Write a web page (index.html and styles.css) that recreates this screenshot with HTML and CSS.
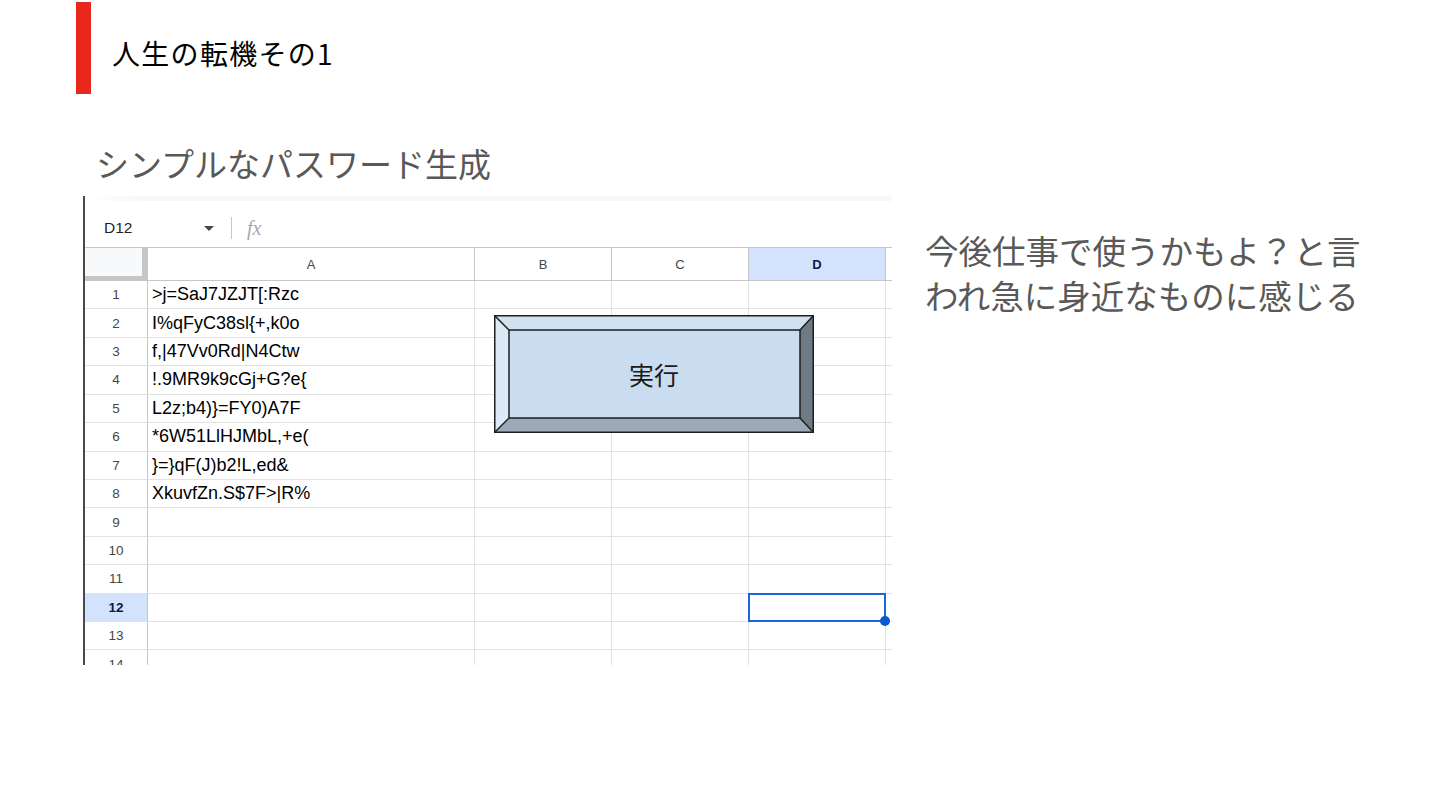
FILE: index.html
```html
<!DOCTYPE html>
<html lang="ja">
<head>
<meta charset="utf-8">
<title>人生の転機その1</title>
<link rel="stylesheet" href="styles.css">
</head>
<body>
<div class="slide">
  <header class="header">
    <div class="bar"></div>
    <h1 class="title">人生の転機その1</h1>
  </header>
  <main class="content">
    <section class="left">
      <h2 class="subtitle">シンプルなパスワード生成</h2>
      <div class="sheet">
        <div class="toolstrip"></div>
        <div class="formula">
          <span class="namebox">D12</span>
          <span class="caret"></span>
          <span class="sep"></span>
          <span class="fx">fx</span>
        </div>
        <div class="grid">
          <div class="corner"></div>
          <div class="colh">A</div>
          <div class="colh">B</div>
          <div class="colh">C</div>
          <div class="colh sel">D</div>
          <div class="colh edge"></div>

          <div class="rowh">1</div><div class="cell">&gt;j=SaJ7JZJT[:Rzc</div><div class="cell"></div><div class="cell"></div><div class="cell"></div><div class="cell edge"></div>
          <div class="rowh">2</div><div class="cell">I%qFyC38sl{+,k0o</div><div class="cell"></div><div class="cell"></div><div class="cell"></div><div class="cell edge"></div>
          <div class="rowh">3</div><div class="cell">f,|47Vv0Rd|N4Ctw</div><div class="cell"></div><div class="cell"></div><div class="cell"></div><div class="cell edge"></div>
          <div class="rowh">4</div><div class="cell">!.9MR9k9cGj+G?e{</div><div class="cell"></div><div class="cell"></div><div class="cell"></div><div class="cell edge"></div>
          <div class="rowh">5</div><div class="cell">L2z;b4)}=FY0)A7F</div><div class="cell"></div><div class="cell"></div><div class="cell"></div><div class="cell edge"></div>
          <div class="rowh">6</div><div class="cell">*6W51LlHJMbL,+e(</div><div class="cell"></div><div class="cell"></div><div class="cell"></div><div class="cell edge"></div>
          <div class="rowh">7</div><div class="cell">}=}qF(J)b2!L,ed&amp;</div><div class="cell"></div><div class="cell"></div><div class="cell"></div><div class="cell edge"></div>
          <div class="rowh">8</div><div class="cell">XkuvfZn.S$7F&gt;|R%</div><div class="cell"></div><div class="cell"></div><div class="cell"></div><div class="cell edge"></div>
          <div class="rowh">9</div><div class="cell"></div><div class="cell"></div><div class="cell"></div><div class="cell"></div><div class="cell edge"></div>
          <div class="rowh">10</div><div class="cell"></div><div class="cell"></div><div class="cell"></div><div class="cell"></div><div class="cell edge"></div>
          <div class="rowh">11</div><div class="cell"></div><div class="cell"></div><div class="cell"></div><div class="cell"></div><div class="cell edge"></div>
          <div class="rowh sel">12</div><div class="cell"></div><div class="cell"></div><div class="cell"></div><div class="cell active"><span class="handle"></span></div><div class="cell edge"></div>
          <div class="rowh">13</div><div class="cell"></div><div class="cell"></div><div class="cell"></div><div class="cell"></div><div class="cell edge"></div>
          <div class="rowh">14</div><div class="cell"></div><div class="cell"></div><div class="cell"></div><div class="cell"></div><div class="cell edge"></div>
        </div>
        <div class="runbtn">
          <svg class="bevel" width="320" height="118" viewBox="0 0 320 118">
            <polygon points="0,0 320,0 306,15 15,15" fill="#d2e1f1"/>
            <polygon points="0,0 15,15 15,103 0,118" fill="#dee9f5"/>
            <polygon points="320,0 320,118 306,103 306,15" fill="#6f7a85"/>
            <polygon points="0,118 15,103 306,103 320,118" fill="#9ba9b8"/>
            <rect x="15" y="15" width="291" height="88" fill="#c9dcf0"/>
            <g stroke="#1e1e1e" stroke-width="1.5" fill="none">
              <rect x="0.75" y="0.75" width="318.5" height="116.5"/>
              <rect x="15" y="15" width="291" height="88"/>
              <line x1="0.75" y1="0.75" x2="15" y2="15"/>
              <line x1="319.25" y1="0.75" x2="306" y2="15"/>
              <line x1="0.75" y1="117.25" x2="15" y2="103"/>
              <line x1="319.25" y1="117.25" x2="306" y2="103"/>
            </g>
          </svg>
          <span class="btnlabel">実行</span>
        </div>
      </div>
    </section>
    <p class="note">今後仕事で使うかもよ？と言われ急に身近なものに感じる</p>
  </main>
</div>
</body>
</html>
```

FILE: styles.css
```css
* { box-sizing: border-box; }
html, body { margin: 0; padding: 0; background: #ffffff; }
body {
  width: 1440px;
  height: 810px;
  overflow: hidden;
  font-family: "Liberation Sans", "Noto Sans CJK JP", sans-serif;
}
.slide { width: 1440px; height: 810px; }

.header {
  display: flex;
  align-items: flex-start;
  height: 92px;
  margin-top: 2px;
  padding-left: 76px;
}
.bar { width: 15px; height: 92px; background: #e8281c; flex: none; }
.title {
  margin: 0 0 0 21px;
  padding-top: 31px;
  font-family: "Noto Sans CJK JP", sans-serif;
  font-weight: 400;
  font-size: 28px;
  line-height: 40px;
  letter-spacing: 1.3px;
  color: #000000;
}

.content {
  display: flex;
  align-items: flex-start;
  margin-top: 49px;
  padding-left: 83px;
}
.left { width: 809px; flex: none; }
.subtitle {
  margin: 0 0 13px 13px;
  font-family: "Noto Sans CJK JP", sans-serif;
  font-weight: 400;
  font-size: 33px;
  line-height: 40px;
  color: #595959;
}

.sheet {
  position: relative;
  width: 809px;
  height: 469px;
  overflow: hidden;
  border-left: 2px solid #4a4a4a;
  background: #ffffff;
}
.toolstrip { height: 5px; background: linear-gradient(to right, #ffffff 0, #f6f7f9 60px, #f6f7f9 100%); }
.formula {
  height: 46px;
  display: flex;
  align-items: center;
  padding-left: 19px;
  padding-top: 8px;
}
.namebox { width: 100px; font-size: 15.5px; color: #1f1f1f; }
.caret {
  width: 0; height: 0;
  border-left: 5px solid transparent;
  border-right: 5px solid transparent;
  border-top: 5px solid #444746;
  margin-right: 17px;
}
.sep { width: 1px; height: 22px; background: #c7c7c7; margin-right: 15px; }
.fx {
  font-family: "Liberation Serif", serif;
  font-style: italic;
  font-size: 20px;
  color: #a8a8a8;
}

.grid {
  display: grid;
  grid-template-columns: 63px 327px 137px 137px 137px 6px;
  grid-template-rows: 34px repeat(14, 28.43px);
}
.corner {
  background: #f8f9fa;
  border-top: 1px solid #c4c7c5;
  border-right: 6px solid #c4c7c5;
  border-bottom: 5px solid #c4c7c5;
}
.colh {
  display: flex;
  align-items: center;
  justify-content: center;
  font-size: 13px;
  color: #444746;
  border-top: 1px solid #c4c7c5;
  border-right: 1px solid #c4c7c5;
  border-bottom: 1px solid #c4c7c5;
}
.colh.sel, .rowh.sel {
  background: #d3e3fd;
  color: #041e49;
  font-weight: 700;
}
.rowh {
  display: flex;
  align-items: center;
  justify-content: center;
  font-size: 13.5px;
  color: #444746;
  border-right: 1px solid #c4c7c5;
  border-bottom: 1px solid #e1e3e1;
}
.cell {
  display: flex;
  align-items: center;
  padding-left: 4px;
  font-size: 18px;
  color: #000000;
  white-space: nowrap;
  border-right: 1px solid #e1e3e1;
  border-bottom: 1px solid #e1e3e1;
}
.cell.edge { border-right: none; padding: 0; }
.colh.edge { border-right: none; }
.cell.active {
  position: relative;
  border: 2px solid #1b66e0;
  margin: -1px 0 0 -1px;
}
.handle {
  position: absolute;
  right: -6px;
  bottom: -6px;
  width: 10px;
  height: 10px;
  border-radius: 50%;
  background: #0b57d0;
}

.runbtn {
  position: absolute;
  left: 409px;
  top: 119px;
  width: 320px;
  height: 118px;
}
.bevel { position: absolute; left: 0; top: 0; }
.btnlabel {
  position: absolute;
  inset: 0;
  display: flex;
  align-items: center;
  justify-content: center;
  font-family: "Noto Sans CJK JP", sans-serif;
  font-size: 25px;
  color: #1a1a1a;
}

.note {
  width: 460px;
  margin: 84px 0 0 33px;
  font-family: "Noto Sans CJK JP", sans-serif;
  font-size: 33.5px;
  line-height: 45px;
  color: #595959;
}
```
